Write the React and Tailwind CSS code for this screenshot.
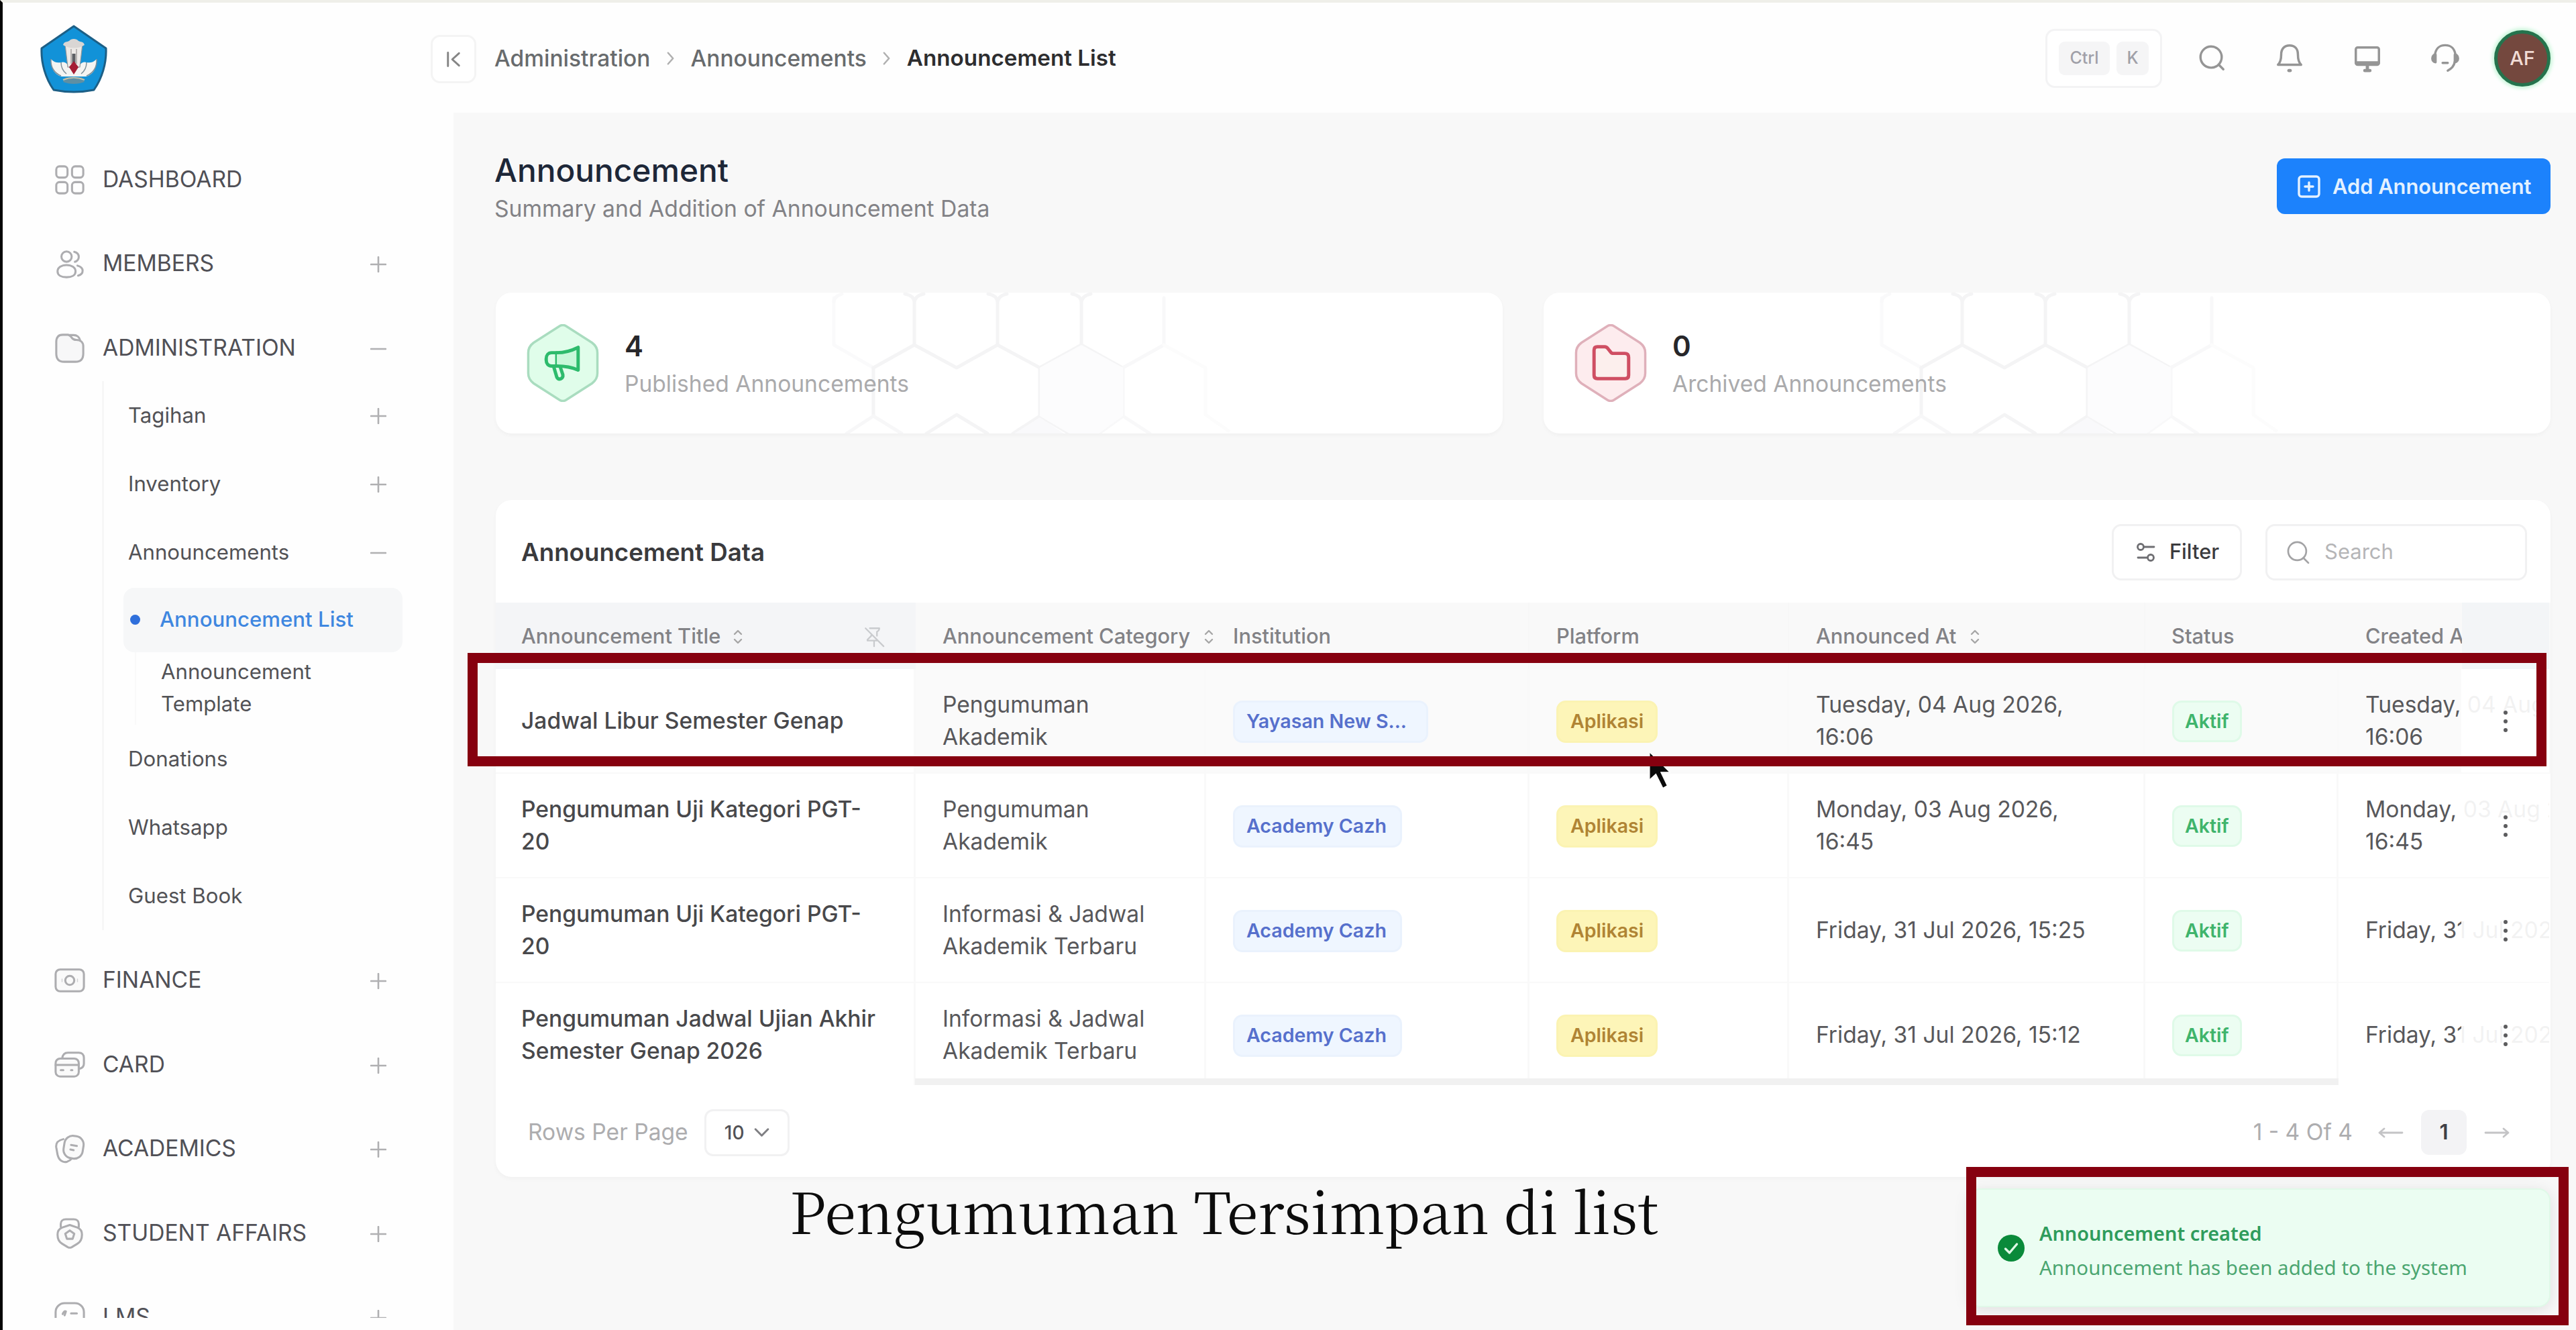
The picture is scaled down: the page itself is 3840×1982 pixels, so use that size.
import React from "react";

const HEX_ICON = "M50 3 Q55 0 60 3 L99 28 Q107 34 107 43 L107 74 Q107 83 99 89 L60 114 Q55 117 50 114 L11 89 Q3 83 3 74 L3 43 Q3 34 11 28 Z";

/* ---------- icons ---------- */

function Svg({ className, viewBox = "0 0 48 48", sw = 3.2, children }) {
  return (
    <svg className={className} viewBox={viewBox} fill="none" stroke="currentColor" strokeWidth={sw} strokeLinecap="round" strokeLinejoin="round">
      {children}
    </svg>
  );
}

const NAV_ICONS = {
  dashboard: (
    <>
      <rect x="3" y="3" width="17.5" height="17.5" rx="5" />
      <rect x="27.5" y="3" width="17.5" height="17.5" rx="5" />
      <rect x="3" y="27.5" width="17.5" height="17.5" rx="5" />
      <rect x="27.5" y="27.5" width="17.5" height="17.5" rx="5" />
    </>
  ),
  members: (
    <>
      <circle cx="19" cy="13" r="8" />
      <path d="M19 26c8 0 14 4 14 10s-6 9-14 9-14-3-14-9 6-10 14-10z" />
      <path d="M31 5.500c4 1 7 4 7 8s-3 7-6 7.500M36 27c4.500 1.200 8 4 8 8s-3 6.500-7 7.500" />
    </>
  ),
  folder: (
    <>
      <path d="M3 14C3 7 6 3 13 3h8c3 0 4 2 6 4.500S31 11 34 11c7 0 11 4 11 10v11c0 9-4 13-12 13H15C7 45 3 41 3 32z" fill="#f7f7f8" />
      <path d="M24 3.500h6c5 0 9 3 10 8" />
    </>
  ),
  finance: (
    <>
      <rect x="2" y="7" width="44" height="34" rx="7" fill="#fafafa" />
      <circle cx="24" cy="24" r="7" />
      <path d="M12 22v4M36 22v4" strokeWidth="1.5" stroke="#d2d2d4" />
    </>
  ),
  card: (
    <>
      <path d="M12 14c1-6 4-9 9-9h17c5 0 8 3 8 8v9c0 4-2 7-7 8" />
      <rect x="2" y="14" width="36" height="28" rx="7" fill="#fafafa" />
      <path d="M2 24h36M10 32h4M26 32h2" />
    </>
  ),
  academics: (
    <>
      <path d="M14 9C5 11 2 15 3 22l2 11c2 9 8 13 15 11 3-1 5-2 7-5" />
      <rect x="15" y="4" width="30" height="35" rx="13" transform="rotate(9 30 21)" fill="#fafafa" />
      <path d="M26 18l9 1.500M25 25l5 1" />
    </>
  ),
  student: (
    <>
      <path d="M10 14V9c0-4 3-7 8-7h12c5 0 8 3 8 7v5" />
      <path d="M24 11l12 4c5 2 7 6 7 11 0 6-2 11-7 14l-9 5.500c-2 1-4 1-6 0L12 40C7 37 5 32 5 26c0-5 2-9 7-11z" fill="#fafafa" />
      <path d="M24 19.500l7 5-2.500 8h-9l-2.500-8z" />
    </>
  ),
  lms: (
    <>
      <rect x="2" y="2" width="44" height="44" rx="14" />
      <path d="M13 19c1-3 3-5 5-4l-2 6M26 18h9" />
    </>
  ),
};

function Plus({ minus }) {
  return (
    <Svg className="h-[24px] w-[24px] shrink-0 text-[#b0b0b2]" viewBox="0 0 24 24" sw={2.6}>
      <path d={minus ? "M1 12h22" : "M1 12h22M12 1v22"} />
    </Svg>
  );
}

function SortIcon() {
  return (
    <Svg className="h-[22px] w-[16px] shrink-0 text-[#a6a6a6]" viewBox="0 0 16 22" sw={2.4}>
      <path d="M3 7l5-5 5 5M3 15l5 5 5-5" />
    </Svg>
  );
}

function Crest() {
  return (
    <svg className="h-[104px] w-[104px]" viewBox="0 0 104 104">
      <path d="M52 3L100 36c1 22-6 45-18 62-20 4-40 4-60 0C10 81 3 58 4 36z" fill="#1292d8" stroke="#1c5f86" strokeWidth="3" strokeLinejoin="round" />
      <path d="M18 52c5 5 9 6 15 5 6-2 10 2 12 8h14c2-6 6-10 12-8 6 1 10 0 15-5 1 14-6 24-16 26H34C24 76 17 66 18 52z" fill="#f4f4f2" />
      <path d="M18 52c-1 12 5 21 15 25M86 52c1 12-5 21-15 25M33 57c0 8 3 13 8 17M71 57c0 8-3 13-8 17" fill="none" stroke="#7d8f99" strokeWidth="1.500" />
      <path d="M39 30c8 3 18 3 26 0l-4 34H43z" fill="#ece9e6" stroke="#8d9499" strokeWidth="1.200" />
      <path d="M36 31c2-6 6-4 9-6 3-4 11-4 14 0 3 2 7 0 9 6-9 6-23 6-32 0z" fill="#d9d6d4" />
      <path d="M48 37v22M56 37v22" stroke="#b7b3b1" strokeWidth="2" />
      <path d="M49.500 44h5v16h-5z" fill="#5d6064" />
      <path d="M52 55l7 9-7 11-7-11z" fill="#a51d33" />
      <path d="M36 86c10 4 22 4 32 0l-4-7c-8 3-16 3-24 0z" fill="#5f8fa3" />
      <path d="M36 83c10-4 22-4 32 0" fill="none" stroke="#c9c2a6" strokeWidth="2" />
    </svg>
  );
}

/* ---------- sidebar ---------- */

function NavItem({ icon, label, sign }) {
  return (
    <div className="flex h-[125.5px] shrink-0 items-center pl-[77px] pr-[100px]">
      <Svg className="mt-[2px] h-[46px] w-[46px] shrink-0 text-[#adadb0]">{NAV_ICONS[icon]}</Svg>
      <span className="ml-[26px] flex-1 whitespace-nowrap text-[33.6px] text-[#505056]">{label}</span>
      {sign && <div className="mt-[4px]"><Plus minus={sign === "minus"} /></div>}
    </div>
  );
}

function SubItem({ label, sign }) {
  return (
    <div className="flex h-[102px] items-center pl-[36px] pr-[100px] pt-[2px]">
      <span className="flex-1 text-[31.2px] text-[#525256]">{label}</span>
      {sign && <div className="mt-[1px]"><Plus minus={sign === "minus"} /></div>}
    </div>
  );
}

function Sidebar() {
  return (
    <aside className="flex w-[672px] shrink-0 flex-col bg-[#fefefe]">
      <div className="h-[200px] pl-[54px] pt-[32px]">
        <Crest />
      </div>
      <nav className="flex h-[1760px] flex-col overflow-hidden">
        <NavItem icon="dashboard" label="DASHBOARD" />
        <NavItem icon="members" label="MEMBERS" sign="plus" />
        <NavItem icon="folder" label="ADMINISTRATION" sign="minus" />
        <div className="-mt-[13px] mb-[12px] ml-[148px] shrink-0 border-l-[3px] border-[#f7f7f7]">
          <SubItem label="Tagihan" sign="plus" />
          <SubItem label="Inventory" sign="plus" />
          <SubItem label="Announcements" sign="minus" />
          <div className="ml-[29px] mr-[76px] mt-[2px] flex h-[96px] items-center rounded-[16px] bg-[#f6f7f8] pl-[10px]">
            <div className="h-[15px] w-[15px] rounded-full bg-[#2f6fdb]" />
            <div className="ml-[29px] text-[31.2px] font-medium text-[#3f87e0]">Announcement List</div>
          </div>
          <div className="ml-[46px] h-[108px] border-l-[2px] border-[#f9f9f9] pl-[37px] pt-[5px] text-[31.2px] leading-[48px] text-[#525256]">
            Announcement
            <br />
            Template
          </div>
          <SubItem label="Donations" />
          <SubItem label="Whatsapp" />
          <SubItem label="Guest Book" />
        </div>
        <NavItem icon="finance" label="FINANCE" sign="plus" />
        <NavItem icon="card" label="CARD" sign="plus" />
        <NavItem icon="academics" label="ACADEMICS" sign="plus" />
        <NavItem icon="student" label="STUDENT AFFAIRS" sign="plus" />
        <NavItem icon="lms" label="LMS" sign="plus" />
      </nav>
    </aside>
  );
}

/* ---------- top bar ---------- */

function Crumb() {
  return (
    <Svg className="mx-[23px] h-[22px] w-[14px] text-[#b0b0b0]" viewBox="0 0 15 24" sw={2.8}>
      <path d="M3 3l8 9-8 9" />
    </Svg>
  );
}

function TopBar() {
  return (
    <header className="flex h-[164px] items-center bg-[#fefefe] pl-[61px] pr-[38px] pt-[2px]">
      <div className="flex flex-1 items-center whitespace-nowrap text-[33.5px] font-medium text-[#686b6d]">
        <span>Administration</span>
        <Crumb />
        <span>Announcements</span>
        <Crumb />
        <span className="text-[33.2px] font-semibold text-[#2d2d2f]">Announcement List</span>
      </div>
      <div className="flex h-[88px] w-[174px] items-center justify-center gap-[10px] rounded-[14px] border-[3px] border-[#f3f3f4] bg-white text-[25px] font-medium text-[#a0a0a8]">
        <span className="flex h-[50px] w-[76px] items-center justify-center rounded-[9px] bg-[#f5f5f6]">Ctrl</span>
        <span className="flex h-[50px] w-[48px] items-center justify-center rounded-[9px] bg-[#f5f5f6]">K</span>
      </div>
      <div className="ml-[16px] mr-[15px] flex text-[#959595]">
        <div className="flex w-[116px] justify-center">
          <Svg className="h-[46px] w-[46px]" sw={3.6}>
            <circle cx="23" cy="22" r="16.500" />
            <path d="M35 34l7 7" />
          </Svg>
        </div>
        <div className="flex w-[116px] justify-center">
          <Svg className="h-[46px] w-[46px]" sw={3.6}>
            <path d="M6 34c4-4 5-9 5-16C11 9 16 4 24 4s13 5 13 14c0 7 1 12 5 16z" />
            <path d="M23 43h2" strokeWidth="5" />
          </Svg>
        </div>
        <div className="flex w-[116px] justify-center">
          <Svg className="h-[46px] w-[46px]" sw={3.6}>
            <rect x="6" y="7" width="36" height="27" rx="3" />
            <path d="M7 31h34" strokeWidth="5" />
            <path d="M24 35v7M20 43h8" strokeWidth="5" />
          </Svg>
        </div>
        <div className="flex w-[116px] justify-center">
          <Svg className="h-[46px] w-[46px]" sw={3.6}>
            <path d="M8 19C9 9 15 3.500 24 3.500S39 9 40 19" />
            <path d="M9 18v12c-3 0-5-3-5-6s2-6 5-6z" fill="currentColor" />
            <path d="M39 18v12c3 0 5-3 5-6s-2-6-5-6z" fill="currentColor" />
            <path d="M39 29c-1 6-5 11-11 14M20 31h8" />
          </Svg>
        </div>
      </div>
      <div className="flex h-[84px] w-[84px] items-center justify-center rounded-full border-[5px] border-[#25734d] bg-[#74483e] text-[29px] font-medium text-[#f1dcd5] shadow-[0_0_6px_2px_#b9f3cf]">
        AF
      </div>
    </header>
  );
}

/* ---------- stat cards ---------- */

function Honeycomb() {
  return (
    <svg className="absolute left-[440px] top-0 h-[210px] w-[800px]" viewBox="440 0 800 210" fill="none" stroke="#f4f4f5" strokeWidth="5" strokeLinejoin="round" strokeLinecap="round">
      <path d="M504 8v70l59 34" stroke="#fafafb" />
      <path d="M624 78V14q-1-10-14-12M624 14q2-10 14-12M748 78V14q-1-10-14-12M748 14q2-10 14-12M873 78V14q-1-10-14-12M873 14q2-10 14-12" />
      <path d="M504 14q0-8 12-12" stroke="#f9f9fa" />
      <path d="M563 112l61-34 63 34 61-34 63 34 62-34 61 34" />
      <path d="M563 112v72M811 112v72l-40 26M811 184l44 26M642 210l45-28 46 28" />
      <path d="M563 184l-40 26M563 184l42 26" stroke="#f7f7f8" />
      <path d="M935 112v72l-36 26M935 184l40 26M935 112l61-34V8" stroke="#f8f8f9" />
      <path d="M996 78l62 34v70l34 24" stroke="#fcfcfc" />
      <path d="M811 112l62-34 62 34v72l-36 26h-44l-44-26z" fill="#fcfcfd" stroke="none" />
      <path d="M811 186l36 24h-74z" fill="#f9f9fb" stroke="none" />
    </svg>
  );
}

function StatCard({ value, label, tone }) {
  const green = tone === "green";
  return (
    <section className="relative flex h-[210px] flex-1 items-center overflow-hidden rounded-[24px] bg-white pl-[45px] shadow-[0_3px_6px_rgba(0,0,0,0.03)]">
      <Honeycomb />
      <svg className="relative h-[116px] w-[110px] shrink-0" viewBox="0 0 110 117" fill="none" strokeLinecap="round" strokeLinejoin="round">
        <path d={HEX_ICON} fill={green ? "#e0fdea" : "#fdecee"} stroke={green ? "#a9dcbf" : "#dfb0ba"} strokeWidth="3.500" />
        {green ? (
          <g stroke="#2dbb6c" strokeWidth="5">
            <path d="M46 43H38c-5 0-8 4-8 9v2c0 5 3 9 8 9h8z" />
            <path d="M46 43c12 0 22-3 32-8v34c-11-5-21-6-32-6" fill="#c9f8da" />
            <path d="M41 63l5 17c3 5 10 2 9-4l-4-12" />
          </g>
        ) : (
          <path d="M30 77V39q0-5 5-5h11q3 0 5 3l4 5q1 2 4 2h17q6 0 6 6v27q0 5-5 5H35q-5 0-5-5z" stroke="#cf4f63" strokeWidth="5" fill="#fcefed" />
        )}
      </svg>
      <div className="relative ml-[37px] mt-[6px]">
        <div className="h-[56px] text-[42px] font-semibold leading-[54px] text-[#27272a]">{value}</div>
        <div className="whitespace-nowrap text-[33.6px] leading-[54px] text-[#aaaaac]">{label}</div>
      </div>
    </section>
  );
}

/* ---------- table ---------- */

const GRID = "grid grid-cols-[626px_433px_482px_387px_531px_288px_314px]";

const ROWS = [
  { title: ["Jadwal Libur Semester Genap"], cat: ["Pengumuman", "Akademik"], inst: "Yayasan New S...", at: ["Tuesday, 04 Aug 2026,", "16:06"], hover: true },
  { title: ["Pengumuman Uji Kategori PGT-", "20"], cat: ["Pengumuman", "Akademik"], inst: "Academy Cazh", at: ["Monday, 03 Aug 2026,", "16:45"] },
  { title: ["Pengumuman Uji Kategori PGT-", "20"], cat: ["Informasi & Jadwal", "Akademik Terbaru"], inst: "Academy Cazh", at: ["Friday, 31 Jul 2026, 15:25"] },
  { title: ["Pengumuman Jadwal Ujian Akhir", "Semester Genap 2026"], cat: ["Informasi & Jadwal", "Akademik Terbaru"], inst: "Academy Cazh", at: ["Friday, 31 Jul 2026, 15:12"] },
];

function Lines({ lines }) {
  return (
    <div className="whitespace-nowrap leading-[48px]">
      {lines.map((l) => (
        <div key={l}>{l}</div>
      ))}
    </div>
  );
}

function TableHead() {
  return (
    <div className={GRID + " h-[99px] items-stretch bg-[#f9f9f9] text-[30.8px] font-medium text-[#828286]"}>
      <div className="flex items-center bg-[#f4f5f7] pl-[38px] pr-[45px] pt-[2px]">
        Announcement Title
        <span className="ml-[18px]"><SortIcon /></span>
        <Svg className="ml-auto h-[34px] w-[34px] text-[#c9cbce]" viewBox="0 0 24 24" sw={1.6}>
          <path d="M12 16v6M3 3l19 19M9 9v2l-4 4v1h11M15 11V6.500c1.500-.5 2.500-1.500 2.500-3.500h-10" />
        </Svg>
      </div>
      <div className="flex items-center pl-[40px] pt-[2px]">
        <span className="whitespace-nowrap">Announcement Category</span>
        <span className="ml-[20px]"><SortIcon /></span>
      </div>
      <div className="flex items-center border-r-[2px] border-[#f7f7f7] pl-[40px] pt-[2px]">Institution</div>
      <div className="flex items-center border-r-[2px] border-[#f7f7f7] pl-[40px] pt-[2px]">Platform</div>
      <div className="flex items-center border-r-[2px] border-[#f7f7f7] pl-[40px] pt-[2px]">
        Announced At
        <span className="ml-[20px]"><SortIcon /></span>
      </div>
      <div className="flex items-center pl-[39px] pt-[2px]">Status</div>
      <div className="flex items-stretch">
        <div className="flex w-[184px] items-center overflow-hidden whitespace-nowrap pl-[40px] pt-[2px]">Created At</div>
        <div className="flex-1 bg-[#f3f5f7]" />
      </div>
    </div>
  );
}

function TableRow({ row }) {
  const cell = "flex items-center border-b-[2px] border-r-[3px] border-[#f9f9f9] pl-[40px] ";
  return (
    <div className={GRID + " h-[156px] text-[33.6px] text-[#58585b] " + (row.hover ? "bg-[#fafafa]" : "bg-white")}>
      <div className="flex items-center border-b-[2px] border-r-[3px] border-[#f9f9f9] bg-white pl-[38px] font-medium text-[#48484b]"><Lines lines={row.title} /></div>
      <div className={cell}><Lines lines={row.cat} /></div>
      <div className={cell}>
        <span className={"mt-[2px] flex h-[63px] items-center rounded-[14px] border-[3px] border-[#eaf2fd] bg-[#eff6ff] px-[17px] text-[28.6px] font-semibold text-[#5670cc] " + (row.hover ? "w-[291px]" : "w-[252px]")}>{row.inst}</span>
      </div>
      <div className={cell}>
        <span className="mt-[2px] flex h-[63px] items-center rounded-[14px] border-[3px] border-[#fbf3b2] bg-[#fdf5b8] px-[18px] text-[28.5px] font-semibold text-[#b08434]">Aplikasi</span>
      </div>
      <div className={cell}><Lines lines={row.at} /></div>
      <div className={cell}>
        <span className="mt-[2px] flex h-[62px] items-center rounded-[14px] border-[3px] border-[#dffae8] bg-[#ecfdf2] px-[16px] text-[28.5px] font-semibold text-[#3fb46c]">Aktif</span>
      </div>
      <div className="relative flex items-center overflow-hidden border-b-[2px] border-[#fafafa] pl-[40px]">
        <Lines lines={row.at} />
        <div className="absolute inset-y-0 right-0 flex w-[131px] items-center justify-center bg-white/92">
          <div className="mt-[2px] flex flex-col items-center gap-[7px]">
            <i className="h-[6px] w-[6px] rounded-full bg-[#5c5c5e]" />
            <i className="h-[6px] w-[6px] rounded-full bg-[#5c5c5e]" />
            <i className="h-[6px] w-[6px] rounded-full bg-[#5c5c5e]" />
          </div>
        </div>
      </div>
    </div>
  );
}

function TableCard() {
  return (
    <section className="relative mt-[99px] flex h-[1009px] flex-col overflow-hidden rounded-[24px] bg-white shadow-[0_3px_6px_rgba(0,0,0,0.03)]">
      <div className="flex h-[153px] items-center pl-[38px] pr-[35px] pt-[2px]">
        <h2 className="flex-1 text-[36.7px] font-semibold text-[#3a3a3d]">Announcement Data</h2>
        <div className="flex h-[84px] w-[194px] items-center rounded-[14px] border-[3px] border-[#f1f1f2] bg-white pl-[32px] text-[30.7px] font-medium text-[#3b3b3e]">
          <Svg className="mr-[19px] h-[32px] w-[32px] text-[#6e6e72]" viewBox="0 0 32 32" sw={2.8}>
            <circle cx="8" cy="8" r="4.500" />
            <path d="M13 8h15M4 24h13" />
            <circle cx="23" cy="24" r="4.500" />
          </Svg>
          Filter
        </div>
        <div className="ml-[35px] flex h-[84px] w-[390px] items-center rounded-[14px] border-[3px] border-[#f1f1f2] bg-white pl-[27px] text-[31px] text-[#b5b5b7]">
          <Svg className="mr-[20px] h-[38px] w-[38px] text-[#a3a3a5]" sw={3.4}>
            <circle cx="22" cy="22" r="17" />
            <path d="M34 35l9 9" />
          </Svg>
          Search
        </div>
      </div>
      <div className="relative">
        <TableHead />
        {ROWS.map((row, i) => (
          <TableRow key={i} row={row} />
        ))}
        {/* horizontal scrollbar over the last row's lower edge */}
        <div className="absolute inset-x-0 bottom-0 h-[4px] bg-white" />
        <div className="absolute bottom-[4px] left-[625px] h-[10px] w-[2122px] bg-[#f1f1f1]" />
      </div>
      <div className="flex flex-1 items-center pl-[48px] pr-[61px] text-[33.6px] text-[#adadaf]">
        Rows Per Page
        <div className="ml-[24px] flex h-[70px] w-[127px] items-center justify-center gap-[14px] rounded-[13px] border-[3px] border-[#f1f1f2] bg-white text-[28px] font-medium text-[#525256]">
          10
          <Svg className="h-[15px] w-[23px] text-[#7f7f83]" viewBox="0 0 24 16" sw={3.2}>
            <path d="M2 3l10 10L22 3" />
          </Svg>
        </div>
        <div className="ml-auto flex items-center">
          1 - 4 Of 4
          <Svg className="ml-[38px] h-[20px] w-[38px] text-[#c4c4c6]" viewBox="0 0 38 20" sw={2.8}>
            <path d="M36 10H2M9 4l-7 6 7 6" />
          </Svg>
          <div className="mx-[26px] flex h-[67px] w-[68px] items-center justify-center rounded-[12px] bg-[#f3f3f5] text-[31px] font-semibold text-[#3f3f46]">1</div>
          <Svg className="h-[20px] w-[38px] text-[#c4c4c6]" viewBox="0 0 38 20" sw={2.8}>
            <path d="M2 10h34M29 4l7 6-7 6" />
          </Svg>
        </div>
      </div>
    </section>
  );
}

/* ---------- page ---------- */

export default function App() {
  return (
    <div className="relative flex h-[1982px] w-[3840px] overflow-hidden border-l-[4px] border-t-[4px] border-l-[#050505] border-t-[#efefe9] bg-[#f8f8f8] font-['Inter',sans-serif] leading-normal">
      <Sidebar />
      <div className="flex flex-1 flex-col">
        <TopBar />
        <main className="pl-[63px] pr-[38px]">
          <div className="flex h-[268px] items-start justify-between">
            <div className="-ml-[2px] pt-[56px]">
              <h1 className="text-[47.8px] font-medium leading-[60px] text-[#1d2738]">Announcement</h1>
              <p className="mt-[2px] text-[33.7px] leading-[50px] text-[#828286]">Summary and Addition of Announcement Data</p>
            </div>
            <button className="mt-[68px] flex h-[83px] w-[408px] items-center rounded-[12px] bg-[#1c82fc] pl-[30px] pt-[1px] text-[30.8px] font-semibold text-[#e3f1ff]">
              <Svg className="mr-[17px] h-[36px] w-[36px]" viewBox="0 0 36 36" sw={3.4}>
                <rect x="3" y="3" width="30" height="30" rx="4" />
                <path d="M18 12v12M12 18h12" />
              </Svg>
              <span className="whitespace-nowrap">Add Announcement</span>
            </button>
          </div>
          <div className="flex gap-[61px]">
            <StatCard value="4" label="Published Announcements" tone="green" />
            <StatCard value="0" label="Archived Announcements" tone="red" />
          </div>
          <TableCard />
        </main>
      </div>

      {/* sidebar collapse toggle, straddling the sidebar edge */}
      <div className="absolute left-[638px] top-[48px] flex h-[72px] w-[68px] items-center justify-center rounded-[14px] border-[3px] border-[#f4f4f4] bg-white">
        <Svg className="h-[25px] w-[22px] text-[#858585]" viewBox="0 0 24 26" sw={3.2}>
          <path d="M3 2v22M21 3L10 13l11 10" />
        </Svg>
      </div>

      {/* pointer */}
      <svg className="absolute left-[2452px] top-[1114px] h-[60px] w-[38px]" viewBox="0 0 40 62">
        <path d="M3 2v44l10-9 11 22 7-4-10-21h14z" fill="#0b0b0b" stroke="#fff" strokeWidth="1.500" />
      </svg>

      {/* success toast */}
      <div className="absolute left-[2930px] top-[1767px] flex h-[177px] w-[868px] items-center rounded-[18px] border-[2px] border-[#e0f9e8] bg-[#ebfdf2] pl-[41px] font-['Noto_Sans',sans-serif] shadow-[0_4px_22px_rgba(0,0,0,0.10)]">
        <svg className="h-[42px] w-[42px]" viewBox="0 0 42 42">
          <circle cx="21" cy="21" r="20" fill="#0a8a3a" />
          <path d="M12.500 22l6 6 11-13" fill="none" stroke="#dff8e7" strokeWidth="3.400" strokeLinecap="round" strokeLinejoin="round" />
        </svg>
        <div className="ml-[21px] mt-[6px] whitespace-nowrap leading-[51px]">
          <div className="text-[28.9px] font-semibold text-[#2f9c5c]">Announcement created</div>
          <div className="text-[29.5px] text-[#4ba671]">Announcement has been added to the system</div>
        </div>
      </div>

      {/* annotation frames and caption */}
      <div className="absolute left-[693px] top-[969px] h-[169px] w-[3099px] border-[15px] border-[#86000f]" />
      <div className="absolute left-[2927px] top-[1735px] h-[236px] w-[898px] border-[15px] border-[#86000f]" />
      <div className="absolute left-[1173px] top-[1757px] whitespace-nowrap font-['Noto_Serif_CJK_SC',serif] text-[84.7px] leading-none text-[#0c0c0c]">
        Pengumuman Tersimpan di list
      </div>
    </div>
  );
}
